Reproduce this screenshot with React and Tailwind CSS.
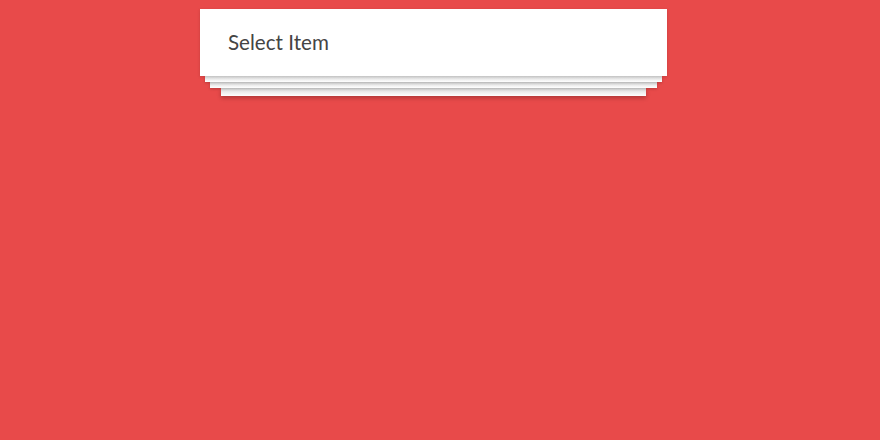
import React from 'react';

const App = () => {
    return (
        <div className="min-h-[440px] w-full bg-[#e84a4a] pt-[9px] font-['Lato','Liberation_Sans',sans-serif]">
            <div className="ml-[200px] flex w-[467px] flex-col">
                <div className="relative z-30 flex h-[67px] items-center bg-white px-[28px] shadow-[0_1px_3px_rgba(0,0,0,0.15)]">
                    <span className="text-[20.6px] text-[#444]">Select Item</span>
                </div>
                <div className="relative z-20 mx-[5px] h-[6px] bg-gradient-to-b from-[#d9d9d9] to-white shadow-[0_1px_3px_rgba(0,0,0,0.2)]" />
                <div className="relative z-10 mx-[10px] h-[6px] bg-gradient-to-b from-[#d9d9d9] to-white shadow-[0_1px_3px_rgba(0,0,0,0.2)]" />
                <div className="relative mx-[21px] h-[8px] bg-gradient-to-b from-[#d9d9d9] to-white shadow-[0_2px_4px_rgba(0,0,0,0.25)]" />
            </div>
        </div>
    );
};

export default App;
